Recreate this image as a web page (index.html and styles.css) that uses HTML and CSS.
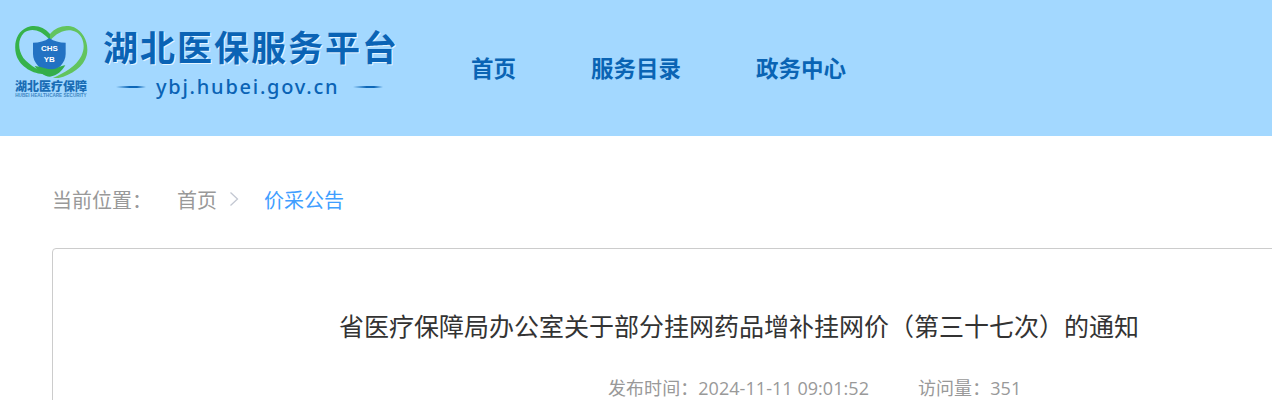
FILE: index.html
```html
<!DOCTYPE html>
<html lang="zh-CN">
<head>
<meta charset="utf-8">
<title>省医疗保障局办公室关于部分挂网药品增补挂网价（第三十七次）的通知</title>
<link rel="stylesheet" href="styles.css">
</head>
<body>
<header class="header">
  <div class="brand">
    <div class="emblem">
      <svg class="emblem-art" width="74" height="56" viewBox="42 36 222 168">
        <path d="M150 72C132 50 104 42 82 52C52 64 40 98 48 132C56 165 92 190 128 192L150 196C118 180 92 170 70 144C54 120 52 88 72 68C94 52 122 60 144 84L150 92Z" fill="#36b24a"/>
        <path d="M150 72C168 50 198 42 222 52C252 66 268 102 260 136C252 170 214 196 176 204L152 207C190 190 226 172 244 138C258 110 250 78 228 66C204 54 174 64 150 92Z" fill="#62c45e"/>
        <path d="M148 84C162 94 178 98 197 98L197 132C197 160 172 180 148 192C124 180 99 160 99 132L99 98C118 98 134 94 148 84Z" fill="#2272c3"/>
        <path d="M104 168C124 170 142 178 156 178C170 178 182 166 196 166C186 182 172 198 150 200C132 200 116 186 104 168Z" fill="#34ad4b"/>
        <text x="148" y="122" class="emblem-mark">CHS</text>
        <text x="148" y="156" class="emblem-mark">YB</text>
      </svg>
      <div class="emblem-name">湖北医疗保障</div>
      <div class="emblem-en">HUBEI HEALTHCARE SECURITY</div>
    </div>
    <div class="brand-text">
      <div class="brand-title">湖北医保服务平台</div>
      <div class="brand-url">
        <span class="dash"></span>
        <span class="url-text">ybj.hubei.gov.cn</span>
        <span class="dash"></span>
      </div>
    </div>
  </div>
  <nav class="nav">
    <a class="nav-item">首页</a>
    <a class="nav-item">服务目录</a>
    <a class="nav-item">政务中心</a>
  </nav>
</header>
<main class="main">
  <div class="crumbs">
    <span class="crumb-label">当前位置：</span>
    <span class="crumb-home">首页</span>
    <svg class="crumb-sep" width="10" height="16" viewBox="0 0 10 16"><path d="M1.5 1.5L8.5 8L1.5 14.5" fill="none" stroke="#c3c8d2" stroke-width="1.3"/></svg>
    <span class="crumb-current">价采公告</span>
  </div>
  <article class="card">
    <h1 class="title">省医疗保障局办公室关于部分挂网药品增补挂网价（第三十七次）的通知</h1>
    <div class="meta">
      <span>发布时间：2024-11-11 09:01:52</span>
      <span>访问量：351</span>
    </div>
  </article>
</main>
</body>
</html>
```
FILE: styles.css
```css
* { box-sizing: border-box; }
html, body { margin: 0; padding: 0; height: 400px; overflow: hidden; background: #fff; }
body { font-family: "Noto Sans CJK SC", "Liberation Sans", sans-serif; }

.header {
  height: 136px;
  background: #a3d8ff;
  display: flex;
  align-items: flex-start;
}
.brand { display: flex; padding: 22px 0 0 14px; width: 471px; flex: none; }
.emblem { width: 74px; display: flex; flex-direction: column; align-items: center; flex: none; }
.emblem-art { display: block; flex: none; }
.emblem-mark { font: 700 24px "Liberation Sans", sans-serif; fill: #fff; text-anchor: middle; }
.emblem-name { font-size: 12px; line-height: 12px; font-weight: 900; color: #1a6db5; margin-top: 2px; white-space: nowrap; }
.emblem-en { font: 700 4.6px/5px "Liberation Sans", sans-serif; color: #3f86c2; margin-top: 1px; white-space: nowrap; }
.brand-text { margin-left: 15px; display: flex; flex-direction: column; align-items: flex-start; width: 294px; flex: none; }
.brand-title {
  font-size: 35px;
  line-height: 50px;
  margin-top: -1px;
  font-weight: 700;
  letter-spacing: 2px;
  color: #0a63b5;
  white-space: nowrap;
  text-shadow: 1px 1px 0 #e4f4ff;
}
.brand-url {
  display: flex;
  align-items: center;
  margin: 3px 0 0 13px;
  font: 500 20px/26px "Noto Sans", sans-serif;
  letter-spacing: 1.75px;
  color: #0a63b5;
  white-space: nowrap;
}
.url-text { margin: 0 14px 0 10px; }
.dash { width: 30px; height: 2px; background: linear-gradient(90deg, #a3d8ff, #0d67b8 45%, #0d67b8 70%, #a3d8ff); }
.nav { display: flex; gap: 75px; padding-top: 49px; }
.nav-item { font-size: 22.5px; line-height: 36px; font-weight: 700; color: #0a64b4; white-space: nowrap; }

.main { padding: 0 0 0 52px; }
.crumbs { display: flex; align-items: center; height: 30px; margin-top: 48px; font-size: 20px; color: #999; white-space: nowrap; }
.crumb-label { width: 125px; }
.crumb-sep { margin: 0 25px 0 12px; flex: none; }
.crumb-current { color: #409eff; }
.card {
  width: 1300px;
  height: 300px;
  margin-top: 34px;
  border: 1px solid #ccc;
  border-radius: 4px;
  padding-top: 55px;
}
.title { margin: 0; padding-left: 286px; font-size: 25px; line-height: 42px; font-weight: 400; color: #333; white-space: nowrap; }
.meta { display: flex; gap: 49px; margin-top: 30px; padding-left: 555px; font-family: "Open Sans", "Noto Sans CJK SC", sans-serif; font-size: 18px; line-height: 24px; letter-spacing: 0.05px; color: #999; white-space: nowrap; }
```
